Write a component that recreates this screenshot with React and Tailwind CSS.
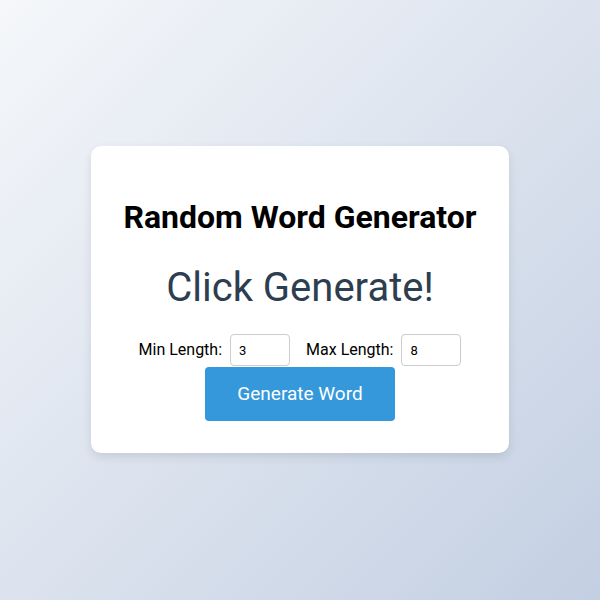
import { useState } from "react";

const WORDS = ["apple", "river", "planet", "garden", "silver", "bright", "candle", "forest"];

export default function App() {
  const [word, setWord] = useState("Click Generate!");
  const [min, setMin] = useState(3);
  const [max, setMax] = useState(8);

  const generate = () => {
    const pool = WORDS.filter((w) => w.length >= min && w.length <= max);
    if (!pool.length) return setWord("No match");
    setWord(pool[Math.floor(Math.random() * pool.length)]);
  };

  return (
    <div
      className="w-[600px] h-[600px] flex justify-center pt-[146px] bg-gradient-to-br from-[#f5f7fa] to-[#c3cfe2]"
      style={{ fontFamily: "Roboto, 'Liberation Sans', sans-serif" }}
    >
      <div className="w-[418px] h-[307px] bg-white rounded-[10px] shadow-[0_4px_10px_rgba(0,0,0,0.1)] p-8 flex flex-col items-center">
        <h1 className="mt-5 text-[32px] leading-[38px] font-bold text-black">Random Word Generator</h1>
        <div className="mt-7 text-[40px] leading-[48px] text-[#2c3e50]">{word}</div>

        {/* length controls */}
        <div className="mt-[22px] flex items-center text-base text-black">
          <label className="mr-2">Min Length:</label>
          <input
            type="number"
            value={min}
            onChange={(e) => setMin(+e.target.value)}
            className="w-[60px] h-8 px-2 text-[13px] border border-[#ccc] rounded-[4px] outline-none"
          />
          <label className="ml-4 mr-2">Max Length:</label>
          <input
            type="number"
            value={max}
            onChange={(e) => setMax(+e.target.value)}
            className="w-[60px] h-8 px-2 text-[13px] border border-[#ccc] rounded-[4px] outline-none"
          />
        </div>

        <button
          onClick={generate}
          className="mt-px w-[190px] h-[54px] bg-[#3498db] text-white text-[19px] rounded-[4px]"
        >
          Generate Word
        </button>
      </div>
    </div>
  );
}
